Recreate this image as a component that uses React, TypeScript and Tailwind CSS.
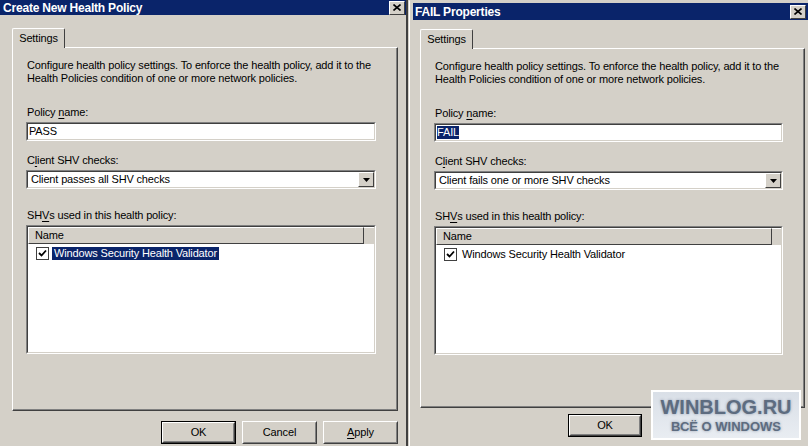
import React from "react";

const font = { fontFamily: '"Liberation Sans", Arial, sans-serif' };

function Sunken({ className = "", children }: { className?: string; children?: React.ReactNode }) {
  return (
    <div className={`border border-t-[#808080] border-l-[#808080] border-b-white border-r-white ${className}`}>
      <div className="h-full border border-t-[#404040] border-l-[#404040] border-b-[#d4d0c8] border-r-[#d4d0c8] bg-white">
        {children}
      </div>
    </div>
  );
}

function Button({ label, def = false, className = "" }: { label?: React.ReactNode; def?: boolean; className?: string }) {
  const inner = (
    <div className="h-full border border-t-white border-l-white border-b-[#404040] border-r-[#404040]">
      <div className="h-full flex items-center justify-center border border-t-[#d4d0c8] border-l-[#d4d0c8] border-b-[#808080] border-r-[#808080] text-[11px] text-black tracking-[-0.15px]">
        {label}
      </div>
    </div>
  );
  return <div className={`h-[23px] ${def ? "border border-black" : ""} ${className}`}>{inner}</div>;
}

function CloseBox() {
  return (
    <div className="w-[16px] h-[14px] bg-[#d4d0c8] border border-t-white border-l-white border-b-[#404040] border-r-[#404040] flex items-center justify-center">
      <svg width="8" height="7" viewBox="0 0 8 7">
        <path d="M0.5 0.5 L7.5 6.5 M7.5 0.5 L0.5 6.5" stroke="#000" strokeWidth="1.6" />
      </svg>
    </div>
  );
}

function Check() {
  return (
    <div className="w-[13px] h-[13px] border border-[#404040] bg-white flex items-center justify-center shrink-0">
      <svg width="9" height="9" viewBox="0 0 9 9">
        <path d="M1 4 L3.5 6.5 L8 1.5" stroke="#000" strokeWidth="1.8" fill="none" />
      </svg>
    </div>
  );
}

type PageProps = {
  name: string;
  nameSelected: boolean;
  check: string;
  rowSelected: boolean;
  pageH: number;
};

function TabPage({ name, nameSelected, check, rowSelected, pageH }: PageProps) {
  return (
    <div
      className="border-l border-t border-white border-r border-b border-r-[#404040] border-b-[#404040] bg-[#d4d0c8]"
      style={{ height: pageH }}
    >
      <div className="h-full border-r border-b border-r-[#808080] border-b-[#808080] pl-[13px] pr-[20px] pt-[11px] text-[11px] leading-[13px] text-black tracking-[-0.15px]">
        <p className="pl-px">
          Configure health policy settings. To enforce the health policy, add it to the
          <br />
          Health Policies condition of one or more network policies.
        </p>
        <div className="mt-[21px] pl-px">
          Policy <u className="underline-offset-2">n</u>ame:
        </div>
        <Sunken className="mt-[3px] h-[19px]">
          <div className="h-full flex items-center pl-[1px]">
            <span className={nameSelected ? "bg-[#0a246a] text-white" : ""}>{name}</span>
          </div>
        </Sunken>
        <div className="mt-[13px] pl-px">
          C<u className="underline-offset-2">l</u>ient SHV checks:
        </div>
        <Sunken className="mt-[3px] h-[19px]">
          <div className="h-full flex items-center justify-between pl-[3px]">
            <span>{check}</span>
            <div className="w-[16px] h-full bg-[#d4d0c8] border border-t-white border-l-white border-b-[#404040] border-r-[#404040] flex items-center justify-center">
              <svg width="7" height="4" viewBox="0 0 7 4">
                <path d="M0 0 H7 L3.5 4 Z" fill="#000" />
              </svg>
            </div>
          </div>
        </Sunken>
        <div className="mt-[20px] pl-px">
          SH<u className="underline-offset-2">V</u>s used in this health policy:
        </div>
        <Sunken className="mt-[3px] h-[129px]">
          <div className="flex h-[17px]">
            <div className="w-[336px] border border-t-white border-l-white border-b-[#404040] border-r-[#404040] bg-[#d4d0c8] flex items-center pl-[6px]">
              Name
            </div>
            <div className="flex-1 bg-[#d4d0c8] border-t border-white" />
          </div>
          <div className="flex items-center h-[18px] pl-[8px] gap-[3px]">
            <Check />
            <span className={`px-[2px] ${rowSelected ? "bg-[#0a246a] text-white" : ""}`}>
              Windows Security Health Validator
            </span>
          </div>
        </Sunken>
      </div>
    </div>
  );
}

function Tab() {
  return (
    <div className="relative z-10 -mb-px w-[53px] h-[20px] bg-[#d4d0c8] border-l border-t border-white border-r border-r-[#404040] rounded-t-[2px] flex items-center justify-center text-[11px] text-black tracking-[-0.15px]">
      Settings
    </div>
  );
}

export default function App() {
  return (
    <div className="w-[808px] h-[446px] overflow-hidden bg-[#d4d0c8] flex" style={font}>
      {/* left dialog */}
      <div className="w-[408px] h-[446px] flex flex-col bg-[#d4d0c8] border-r-2 border-r-[#404040]">
        <div className="h-[15px] bg-[#0a246a] flex items-center justify-between pl-[3px] pr-[1px]">
          <span className="text-white font-bold text-[12px] tracking-[-0.2px]">Create New Health Policy</span>
          <CloseBox />
        </div>
        <div className="pl-[12px] pr-[8px] pt-[13px]">
          <Tab />
          <TabPage name="PASS" nameSelected={false} check="Client passes all SHV checks" rowSelected={true} pageH={364} />
          <div className="flex justify-end gap-[6px] mt-[10px]">
            <Button label="OK" def className="w-[75px]" />
            <Button label="Cancel" className="w-[75px]" />
            <Button label={<span><u className="underline-offset-2">A</u>pply</span>} className="w-[75px]" />
          </div>
        </div>
      </div>
      {/* right dialog */}
      <div className="relative ml-[1px] w-[399px] h-[446px] border-l border-t border-[#d4d0c8] border-l-white">
        <div className="h-full border-l-2 border-l-[#d4d0c8] pt-[2px] pl-px">
          <div className="h-[17px] bg-[#0a246a] flex items-center justify-between pl-[2px] pr-[2px]">
            <span className="text-white font-bold text-[12px] tracking-[-0.2px]">FAIL Properties</span>
            <CloseBox />
          </div>
          <div className="pl-[7px] pr-[3px] pt-[9px]">
            <Tab />
            <TabPage name="FAIL" nameSelected={true} check="Client fails one or more SHV checks" rowSelected={false} pageH={360} />
            <div className="flex gap-[6px] mt-[6px] pl-[148px]">
              <Button label="OK" def className="w-[74px]" />
            </div>
          </div>
        </div>
        {/* watermark */}
        <div className="absolute left-[241px] top-[389px] w-[150px] h-[50px] border-2 border-white bg-gradient-to-b from-[#d9dfe7] to-[#e9edf2] flex flex-col items-center justify-center">
          <span className="text-[20px] leading-[20px] font-bold text-[#5d6c80] [text-shadow:0_0_3px_#8a96a8]">WINBLOG.RU</span>
          <span className="text-[13px] leading-[14px] font-bold text-[#5d6c80] mt-[3px] [text-shadow:0_0_3px_#8a96a8]">ВСЁ О WINDOWS</span>
        </div>
      </div>
    </div>
  );
}
